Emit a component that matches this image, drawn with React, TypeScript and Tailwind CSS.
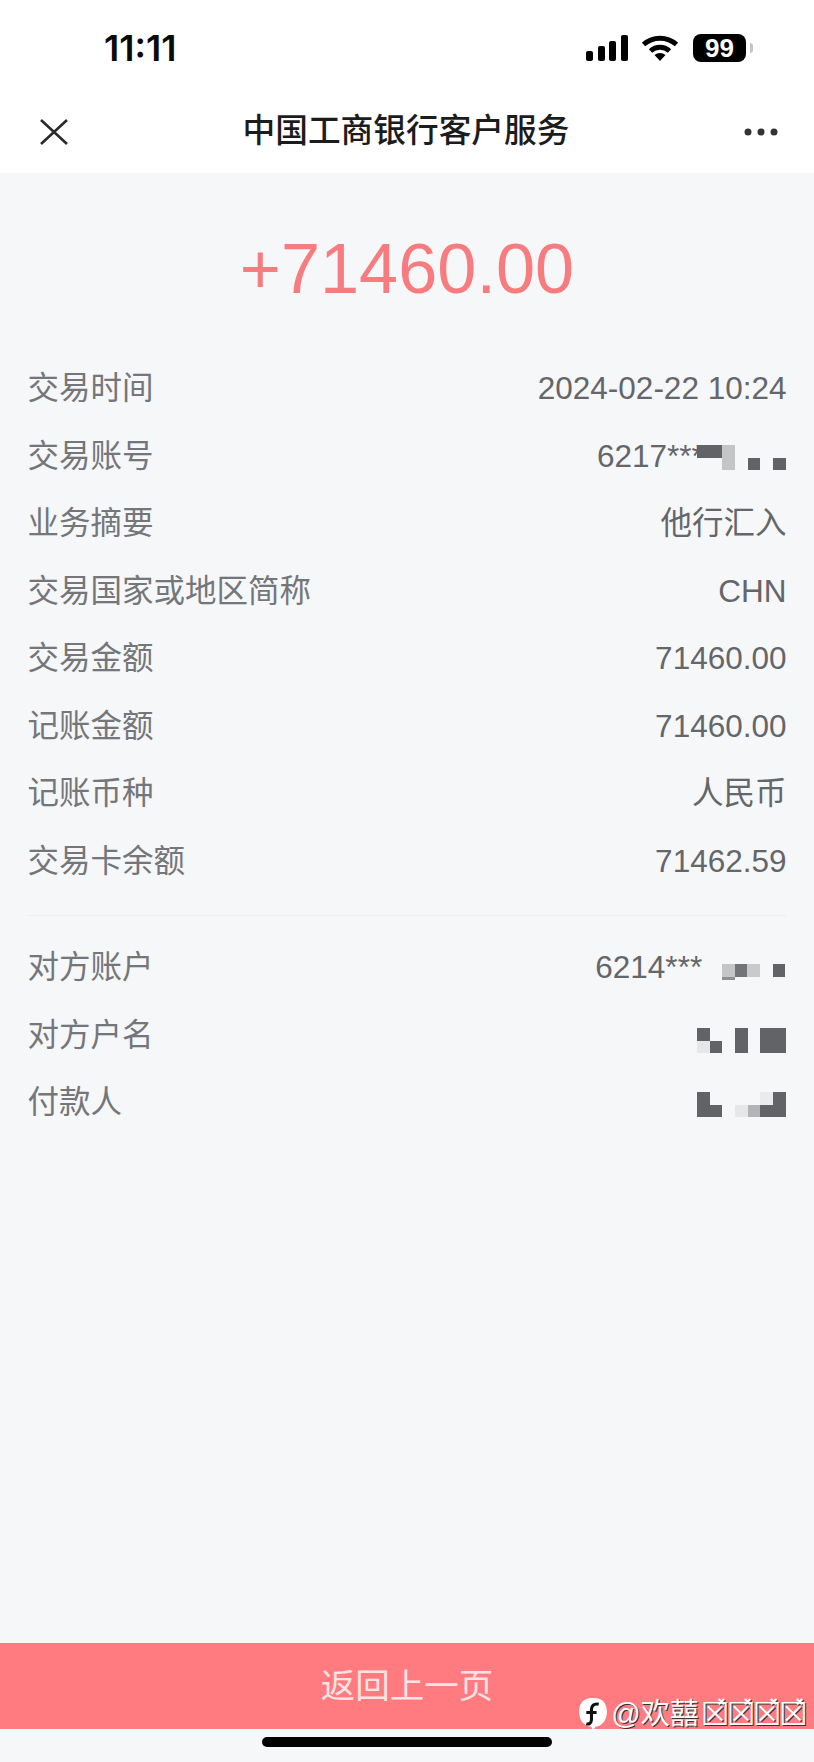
const ROWS_TOP = [
  { label: '交易时间', value: '2024-02-22 10:24' },
  { label: '交易账号', value: 'account' },
  { label: '业务摘要', value: '他行汇入' },
  { label: '交易国家或地区简称', value: 'CHN' },
  { label: '交易金额', value: '71460.00' },
  { label: '记账金额', value: '71460.00' },
  { label: '记账币种', value: '人民币' },
  { label: '交易卡余额', value: '71462.59' },
]

// one mosaic block is a 12.67px square: [col, row, shade, height]
type Cell = [number, number, string, number?]

function Mosaic({ cols, rows, cells, className }: { cols: number; rows: number; cells: Cell[]; className?: string }) {
  return (
    <svg
      className={className}
      width={cols * 12.67}
      height={rows * 12.67}
      viewBox={`0 0 ${cols} ${rows}`}
      shapeRendering="crispEdges"
    >
      {cells.map(([x, y, fill, h], i) => (
        <rect key={i} x={x} y={y} width="1" height={h ?? 1} fill={fill} />
      ))}
    </svg>
  )
}

const DARK = '#626366'

function Row({ label, children }: { label: string; children: React.ReactNode }) {
  return (
    <div className="flex h-[67.5px] items-center justify-between">
      <span className="text-[#747679]">{label}</span>
      <span className="flex items-center text-[#64666a]">{children}</span>
    </div>
  )
}

function StatusIcons() {
  return (
    <div className="flex items-center">
      <svg width="42" height="26" viewBox="0 0 42 26" fill="#000">
        <rect x="0" y="16" width="7" height="10" rx="2" />
        <rect x="12" y="11" width="7" height="15" rx="2" />
        <rect x="23" y="6" width="7" height="20" rx="2" />
        <rect x="35" y="0" width="7" height="26" rx="2" />
      </svg>
      <svg className="ml-[14px]" width="36" height="26" viewBox="0 0 36 26" fill="none" stroke="#000" strokeWidth="5">
        <path d="M1.5 9.5C11 1 25 1 34.5 9.5" />
        <path d="M8.5 16C14 11 22 11 27.5 16" />
        <path d="M18 26l-5.5-6c3-2.8 8-2.8 11 0z" fill="#000" stroke="none" />
      </svg>
      <div className="ml-[15px] flex h-[28px] w-[53px] items-center justify-center rounded-[8px] bg-black text-[26px] font-bold leading-none text-white">
        99
      </div>
      <div className="ml-[4px] h-[10px] w-[3px] rounded-r bg-[#c4c4c4]" />
    </div>
  )
}

export default function App() {
  return (
    <div className="flex h-[1762px] w-[814px] flex-col bg-[#f6f7f9] font-['Liberation_Sans','Noto_Sans_CJK_SC',sans-serif] text-[31.5px] leading-none">
      <div className="h-[173px] shrink-0 bg-white">
        <div className="flex h-[88px] items-center justify-between pl-[104px] pr-[61px] pt-[8px]">
          <span className="font-['Inter'] text-[36px] font-semibold text-[#0a0a0a]">11:11</span>
          <StatusIcons />
        </div>
        <div className="flex h-[85px] items-center justify-between pl-[40px] pr-[36px] pt-[2px]">
          <svg width="28" height="26" viewBox="0 0 28 26" stroke="#2a2a2a" strokeWidth="2.6" fill="none">
            <path d="M1 1l26 24M27 1L1 25" />
          </svg>
          <span className="text-[32.7px] font-medium text-[#1c1c1c]">中国工商银行客户服务</span>
          <svg width="34" height="8" viewBox="0 0 34 8" fill="#333">
            <circle cx="4" cy="4" r="3.5" />
            <circle cx="17" cy="4" r="3.5" />
            <circle cx="30" cy="4" r="3.5" />
          </svg>
        </div>
      </div>

      <div className="flex h-[167px] items-center justify-center pt-[26px] text-[70.3px] text-[#f67c80]">
        +71460.00
      </div>

      <div className="px-[27.5px] pt-[15px]">
        {ROWS_TOP.map((row) => (
          <Row key={row.label} label={row.label}>
            {row.value === 'account' ? (
              <>
                <span className="mr-[-7px]">6217***</span>
                <Mosaic
                  className="mt-[2px] mr-[1px]"
                  cols={7}
                  rows={2}
                  cells={[
                    [0, 0, DARK],
                    [1, 0, DARK],
                    [2, 0, '#c4c5c7'],
                    [2, 1, '#c4c5c7'],
                    [4, 1, DARK],
                    [6, 1, DARK],
                  ]}
                />
              </>
            ) : (
              row.value
            )}
          </Row>
        ))}
      </div>

      <div className="mx-[28px] mt-[20px] mb-[18px] h-px bg-[#eceef0]" />

      <div className="px-[27.5px]">
        <Row label="对方账户">
          <span className="mr-[20px]">6214***</span>
          <Mosaic
            className="mt-[8px] mr-[1px]"
            cols={5}
            rows={1.25}
            cells={[
              [0, 0, '#c4c5c7'],
              [1, 0, '#737477'],
              [2, 0, '#c9cacc'],
              [4, 0, DARK],
              [0, 1, '#8f9092', 0.25],
            ]}
          />
        </Row>
        <Row label="对方户名">
          <Mosaic
            className="mt-[11px] mr-[1px]"
            cols={7}
            rows={2}
            cells={[
              [0, 0, DARK],
              [0, 1, '#e6e7e9'],
              [1, 1, DARK],
              [3, 0, DARK],
              [3, 1, DARK],
              [5, 0, DARK],
              [6, 0, DARK],
              [5, 1, DARK],
              [6, 1, DARK],
            ]}
          />
        </Row>
        <Row label="付款人">
          <Mosaic
            className="mt-[3px] mr-[1px]"
            cols={7}
            rows={2}
            cells={[
              [0, 0, DARK],
              [0, 1, DARK],
              [1, 1, DARK],
              [3, 1, '#e6e7e9'],
              [4, 1, '#b3b4b6'],
              [5, 0, '#eaebed'],
              [5, 1, DARK],
              [6, 0, DARK],
              [6, 1, DARK],
            ]}
          />
        </Row>
      </div>

      <div className="relative mt-auto flex h-[86px] items-center justify-center bg-[#ff7b7f] text-[34.5px] text-[#fde3e4]">
        返回上一页
        <div className="absolute bottom-[-3px] right-[9px] flex h-[36px] items-center text-[29px] text-white [text-shadow:1px_1px_0_#333]">
          <svg width="30" height="35" viewBox="0 0 29 34" className="mr-[3px]">
            <path d="M13 1h3c7 0 12 5 12 13 0 9-5 14-11 15l-3 4-1-4C5 28 1 22 1 14 1 6 6 1 13 1z" fill="#fff" />
            <path d="M20 7c-5-1-7 2-7 5v10c0 3-2 5-5 4M8 15h10" fill="none" stroke="#111" strokeWidth="3" />
          </svg>
          @欢囍
          <span className="ml-[2px] font-['DejaVu_Sans'] text-[32px] tracking-[-2.6px]">☒̽☒̽☒̽☒̽</span>
        </div>
      </div>

      <div className="flex h-[33px] shrink-0 justify-center pt-[8px]">
        <div className="h-[10px] w-[290px] rounded-full bg-black" />
      </div>
    </div>
  )
}
